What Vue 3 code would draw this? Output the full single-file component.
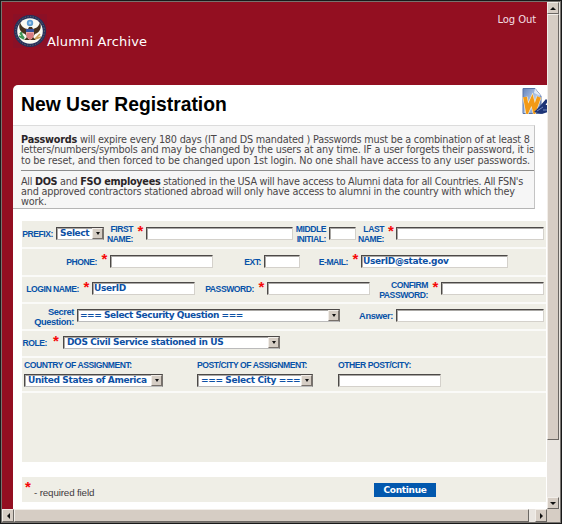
<script setup>
const star = '*'
</script>

<template>
  <div class="window">
    <div class="page">
      <header class="banner">
        <svg class="seal" viewBox="0 0 34 34">
          <rect width="34" height="34" fill="#8b1026" />
          <circle cx="17" cy="17" r="16" fill="#26315c" />
          <circle cx="17" cy="17" r="14.4" fill="none" stroke="#6f6c66" stroke-width="1" stroke-dasharray="1.2 1.5" />
          <circle cx="17" cy="17" r="12.8" fill="#fbfaf2" />
          <circle cx="17" cy="9" r="3.2" fill="#5b9bd2" />
          <circle cx="17" cy="9" r="1.4" fill="#a9cce8" />
          <path d="M7 8C8 12 11 15 15 15L16 13H19L20 15C24 14 26 12 27 8C29 14 27 18 22 20L20 23L23 26H11L14 23L12 20C7 18 5 14 7 8Z" fill="#46301e" />
          <path d="M13 16H21V20C21 23 19 25 17 26C15 25 13 23 13 20Z" fill="#e9a4a5" />
          <path d="M13 15H21V18H13Z" fill="#35519b" />
          <path d="M15 19V24M17 19V26M19 19V24" stroke="#c33c49" stroke-width=".8" />
          <path d="M7 19L11 24M6 22L11 25M8 18L9 22" stroke="#3f9654" stroke-width="2" />
          <path d="M27 20L22 25M28 23L22 25" stroke="#c79d56" stroke-width="1.6" />
        </svg>
        <span class="brand">Alumni Archive</span>
        <span class="logout">Log Out</span>
      </header>

      <main class="panel">
        <div class="heading">
          <h1>New User Registration</h1>
          <svg class="doc" viewBox="0 0 26 26">
            <defs>
              <linearGradient id="sheet" x1="0" y1="0" x2="1" y2="1">
                <stop offset="0" stop-color="#6484be" />
                <stop offset=".55" stop-color="#b8cce9" />
                <stop offset="1" stop-color="#4569ab" />
              </linearGradient>
            </defs>
            <path d="M1 .5H13L19 8V25.5H1Z" fill="url(#sheet)" stroke="#5873a8" />
            <path d="M13 .5L19 8L12 5Z" fill="#e2ebf7" />
            <path d="M3 9L5.5 22L10 12L12.5 22L17 9" fill="none" stroke="#fff1cc" stroke-width="5" />
            <path d="M3 9L5.5 22L10 12L12.5 22L17 9" fill="none" stroke="#f39a16" stroke-width="3.9" />
            <path d="M12 24L18 18L24 11L26 13L23.5 17H26V24L20 26Z" fill="#1d3476" />
            <path d="M15 23L21 19M21 22H25" stroke="#738ac0" stroke-width="1" />
          </svg>
        </div>

        <section class="notice">
          <p>
            <span class="ln n1"><b>Passwords</b> will expire every 180 days (IT and DS mandated ) Passwords must be a combination of at least 8</span>
            <span class="ln n2">letters/numbers/symbols and may be changed by the users at any time. IF a user forgets their password, it is</span>
            <span class="ln n3">to be reset, and then forced to be changed upon 1st login. No one shall have access to any user passwords.</span>
          </p>
          <hr />
          <p>
            <span class="ln n4">All <b>DOS</b> and <b>FSO employees</b> stationed in the USA will have access to Alumni data for all Countries. All FSN's</span>
            <span class="ln n5">and approved contractors stationed abroad will only have access to alumni in the country with which they</span>
            <span class="ln n6">work.</span>
          </p>
        </section>

        <form class="form" @submit.prevent>
          <div class="row r1">
            <label class="near">PREFIX:</label>
            <div class="field select"><span>Select</span><i class="arrow"></i></div>
            <label class="two">FIRST<br />NAME:</label><em>{{ star }}</em>
            <div class="field"></div>
            <label class="two near">MIDDLE<br />INITIAL:</label>
            <div class="field"></div>
            <label class="two">LAST<br />NAME:</label><em>{{ star }}</em>
            <div class="field"></div>
          </div>
          <div class="row r2">
            <label>PHONE:</label><em>{{ star }}</em>
            <div class="field"></div>
            <label class="near">EXT:</label>
            <div class="field"></div>
            <label>E-MAIL:</label><em>{{ star }}</em>
            <div class="field"><span>UserID@state.gov</span></div>
          </div>
          <div class="row r3">
            <label>LOGIN NAME:</label><em>{{ star }}</em>
            <div class="field"><span>UserID</span></div>
            <label>PASSWORD:</label><em>{{ star }}</em>
            <div class="field"></div>
            <label class="two">CONFIRM<br />PASSWORD:</label><em>{{ star }}</em>
            <div class="field"></div>
          </div>
          <div class="row r4">
            <label class="two wide near">Secret<br />Question:</label>
            <div class="field select"><span>=== Select Security Question ===</span><i class="arrow"></i></div>
            <label class="wide near">Answer:</label>
            <div class="field"></div>
          </div>
          <div class="row r5">
            <label>ROLE:</label><em>{{ star }}</em>
            <div class="field select"><span>DOS Civil Service stationed in US</span><i class="arrow"></i></div>
          </div>
          <div class="row r6">
            <div class="stack">
              <label>COUNTRY OF ASSIGNMENT:</label>
              <div class="field select"><span>United States of America</span><i class="arrow"></i></div>
            </div>
            <div class="stack">
              <label>POST/CITY OF ASSIGNMENT:</label>
              <div class="field select"><span>=== Select City ===</span><i class="arrow"></i></div>
            </div>
            <div class="stack">
              <label>OTHER POST/CITY:</label>
              <div class="field"></div>
            </div>
          </div>
          <div class="row r7"></div>
        </form>

        <footer class="foot">
          <em>{{ star }}</em><span class="req">- required field</span>
          <button type="button">Continue</button>
        </footer>
      </main>
    </div>

    <div class="vbar">
      <div class="btn"><i class="tri up"></i></div>
      <div class="thumb"></div>
      <div class="track"></div>
      <div class="btn"><i class="tri down"></i></div>
    </div>
    <div class="hbar">
      <div class="btn"><i class="tri left"></i></div>
      <div class="thumb"></div>
      <div class="track"></div>
      <div class="btn"><i class="tri right"></i></div>
    </div>
    <div class="corner"></div>
  </div>
</template>

<style>
body { margin: 0; background: #191919; }
</style>

<style scoped>
* { box-sizing: border-box; }
.window {
  width: 562px; height: 524px;
  display: grid;
  grid-template-columns: 545px 13px;
  grid-template-rows: 507px 13px;
  padding: 1px;
  border: 1px solid #191919;
  background: #77736f;
  font-family: "DejaVu Sans", sans-serif;
}
.page { background: #930f21; display: flex; flex-direction: column; overflow: hidden; }
.banner { height: 83px; flex: none; display: flex; align-items: flex-start; }
.seal { width: 34px; height: 34px; margin: 12px 0 0 11px; }
.brand { color: #fff; font-size: 13px; line-height: 16px; margin-top: 32px; white-space: nowrap; width: 120px; letter-spacing: .15px; }
.logout { color: #f3dfe1; font-size: 10px; line-height: 12px; margin: 12px 0 0 auto; padding-right: 11px; letter-spacing: -.1px; }
.panel {
  flex: 1; margin-left: 11px; background: #fff; border-top-left-radius: 5px;
  display: flex; flex-direction: column;
}
.heading { height: 40px; flex: none; display: flex; justify-content: space-between; }
h1 { margin: 8px 0 0 8px; font: bold 19.3px/23px "Liberation Sans", sans-serif; color: #000; white-space: nowrap; }
.doc { width: 26px; height: 26px; margin: 3px -1px 0 0; }
.notice {
  width: 522px; height: 84px; flex: none; background: #f6f6f6;
  border: 1px solid #dcdcdc; border-right-color: #c4c4c4; border-bottom-color: #b5b5b5; border-left: 0;
  padding: 9px 0 0 8px; color: #4a4648; font-size: 9.7px;
}
.notice p { margin: 0; }
.notice b { color: #2a2528; }
.ln { display: block; height: 10.3px; line-height: 10.3px; white-space: nowrap; letter-spacing: -.17px; }
.n1 { letter-spacing: -.21px; }
.n3 { letter-spacing: -.145px; }
.n4 { letter-spacing: -.295px; }
.n5 { letter-spacing: -.21px; }
hr { margin: 4px 0 6px; border: 0; height: 1px; background: #8d8d8d; }
.form { margin: 12px 1px 0 9px; display: flex; flex-direction: column; gap: 2px; background: #fafaf8; flex: none; }
.row { background: #efeee6; height: 25px; display: grid; align-items: center; }
.r1 { height: 26px; grid-template-columns: 34px 48px 29px 13px 147px 36px 27px 28px 12px 148px; }
.r2 { height: 26px; grid-template-columns: 75px 13px 103px 51px 36px 48px 13px 147px; }
.r3 { grid-template-columns: 57px 13px 103px 59px 13px 103px 58px 13px 103px; }
.r4 { grid-template-columns: 55px 263px 56px 148px; }
.r5 { grid-template-columns: 25px 16px 217px; }
.r6 { height: 33px; grid-template-columns: 173px 141px 103px; padding-left: 2px; align-items: start; }
.r7 { height: 69px; }
label {
  font: bold 8.6px/11px "Liberation Sans", sans-serif; color: #0752a8;
  text-align: right; white-space: nowrap; letter-spacing: -.45px; justify-self: end;
}
.near { padding-right: 3px; }
.two { line-height: 10px; }
.wide { font-size: 9.3px; letter-spacing: -.4px; }
.field {
  height: 13px; background: #fff; min-width: 0; margin-bottom: 2px;
  border: 1px solid #d4d1cb; border-top-color: #4c4947; border-left-color: #4c4947;
  box-shadow: inset 1px 1px #aaa8a5;
  display: flex; align-items: center; overflow: hidden;
}
.field span {
  flex: 1; min-width: 0; font-weight: bold; font-size: 9px; line-height: 11px; color: #0d50a4;
  white-space: nowrap; padding-left: 1px; letter-spacing: -.35px;
}
.select { border-right-color: #77736f; border-bottom-color: #bbb; }
.select span { padding-left: 3px; }
.r4 .select span { letter-spacing: -.43px; padding-left: 2px; }
.arrow {
  width: 11px; height: 11px; flex: none; background: #d5cdc4; display: grid; place-items: center;
  border: 1px solid #f1ede8; border-right-color: #77706a; border-bottom-color: #77706a;
}
.arrow::before { content: ""; border: 2.5px solid transparent; border-top: 3px solid #111; border-bottom: 0; }
em { font: bold 15px/14px "Liberation Sans", sans-serif; color: #f50808; justify-self: center; height: 14px; margin: 0 0 6px 2px; }
.stack { display: flex; flex-direction: column; align-items: flex-start; }
.stack label { margin-top: 2px; height: 14px; }
.stack .field { width: 139px; }
.stack:nth-child(2) .field { width: 116px; }
.stack:nth-child(3) .field { width: 103px; }
.foot { height: 25px; margin: 15px 1px 0 9px; background: #efeee6; display: flex; flex: none; align-items: flex-start; }
.foot em { margin: 3px 0 0 3px; width: 9px; }
.req { font: 9.8px/12px "Liberation Sans", sans-serif; color: #3f3b3d; margin-top: 10px; width: 318px; letter-spacing: -.15px; }
.foot button {
  margin: 6px 0 0 22px; width: 62px; height: 14px; padding: 0; border: 0; background: #0258ae;
  color: #fff; font: bold 9px/14px "DejaVu Sans", sans-serif; letter-spacing: -.3px;
}
.vbar { background: #e9e5e0; display: flex; flex-direction: column; }
.hbar { background: #e9e5e0; display: flex; }
.btn, .thumb {
  background: #d6cdc4; border: 1px solid #f2eee9; border-right-color: #6b6763; border-bottom-color: #6b6763;
}
.btn { display: grid; place-items: center; flex: none; width: 12px; height: 12px; }
.track { flex: 1; }
.vbar .thumb { height: 426px; width: 12px; }
.hbar .btn { height: 13px; }
.hbar .thumb { width: 515px; height: 13px; }
.corner { background: #d6cdc4; }
.tri { width: 0; height: 0; border: 3px solid transparent; }
.up { border-bottom-color: #111; border-top: 0; }
.down { border-top-color: #111; border-bottom: 0; }
.left { border-right-color: #111; border-left: 0; }
.right { border-left-color: #111; border-right: 0; }
</style>
